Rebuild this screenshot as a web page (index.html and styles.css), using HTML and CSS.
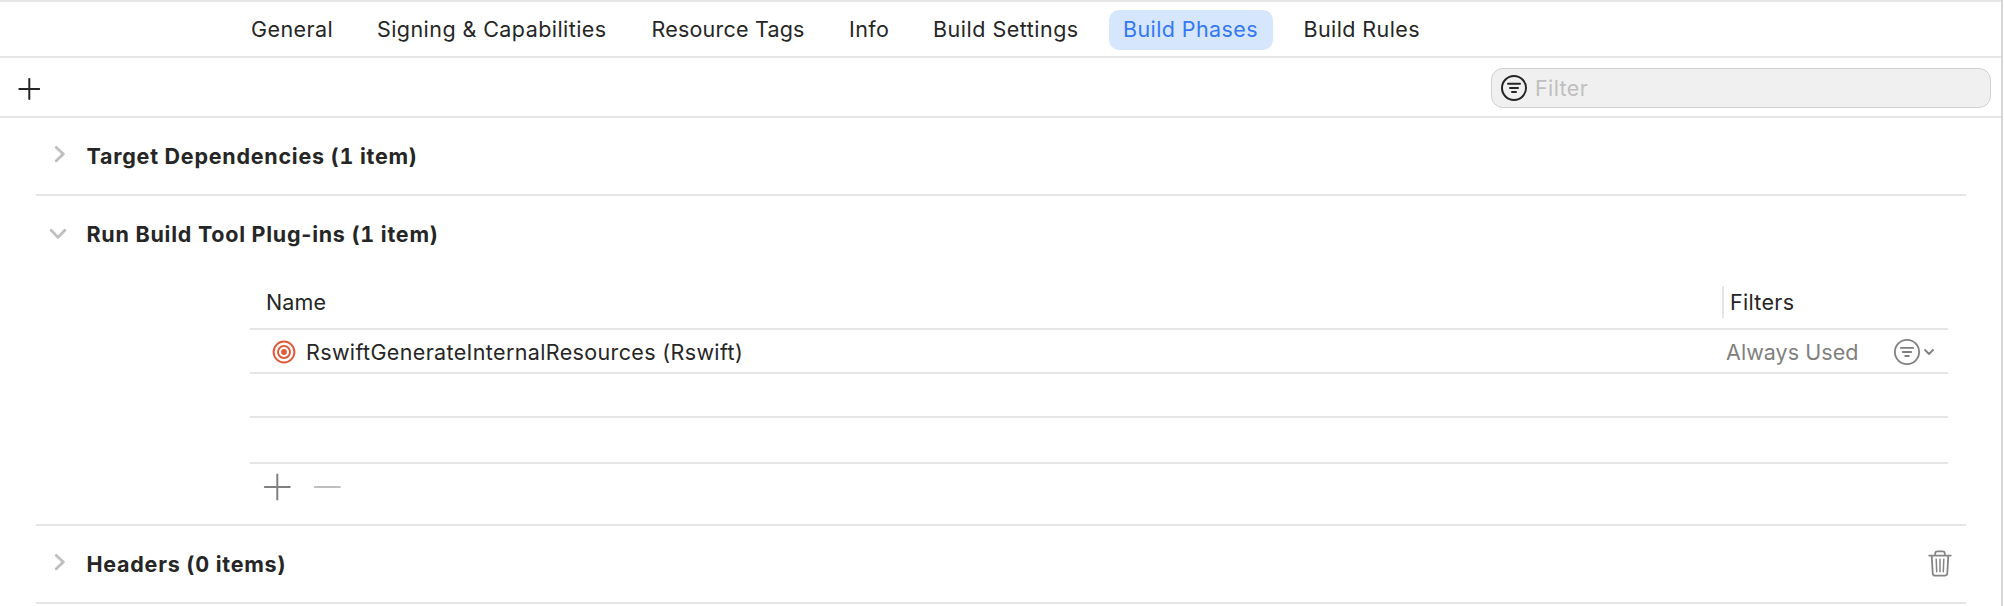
FILE: index.html
```
<!DOCTYPE html>
<html lang="en">
<head>
<meta charset="utf-8">
<title>Build Phases</title>
<link rel="stylesheet" href="styles.css">
</head>
<body>
<main class="editor">
  <nav class="tabs">
    <a class="tab">General</a>
    <a class="tab tab-signing">Signing &amp; Capabilities</a>
    <a class="tab tab-tags">Resource Tags</a>
    <a class="tab">Info</a>
    <a class="tab tab-settings">Build Settings</a>
    <a class="tab tab-active">Build Phases</a>
    <a class="tab">Build Rules</a>
  </nav>
  <div class="toolbar">
    <svg class="add" width="22" height="22" viewBox="0 0 22 22"><path d="M11.3 1v20M1.3 11h20"/></svg>
    <div class="filter">
      <svg class="funnel" width="26" height="26" viewBox="0 0 26 26"><circle cx="13" cy="13" r="12"/><path d="M7 8.7h12M9 13h8M11 17h4"/></svg>
      <span class="placeholder">Filter</span>
    </div>
  </div>
  <section class="phase">
    <header class="phase-header">
      <svg class="chevron" width="20" height="20" viewBox="0 0 20 20"><path d="M8.3 1.4l7 6.7l-7 6.7"/></svg>
      <h2 class="title">Target Dependencies (<span class="count">1</span> item)</h2>
    </header>
  </section>
  <section class="phase">
    <header class="phase-header">
      <svg class="chevron" width="20" height="20" viewBox="0 0 20 20"><path d="M3.2 6.2l6.8 7.2l6.8-7.2"/></svg>
      <h2 class="title">Run Build Tool Plug-ins (<span class="count">1</span> item)</h2>
    </header>
    <div class="table">
      <div class="row head">
        <span class="name">Name</span>
        <span class="filters">Filters</span>
      </div>
      <div class="row item">
        <svg class="target" width="24" height="24" viewBox="0 0 24 24"><circle cx="12" cy="12" r="10.4"/><circle cx="12" cy="12" r="6"/><circle class="dot" cx="12" cy="12" r="2.9"/></svg>
        <span class="plugin">RswiftGenerateInternalResources (Rswift)</span>
        <span class="usage">Always Used</span>
        <svg class="funnel muted" width="42" height="26" viewBox="0 0 42 26"><circle cx="13" cy="13" r="12.1"/><path d="M6.8 8.9h12.4M8.8 13h8.4M11.2 17h3.6"/><path d="M31 11l4 4 4-4"/></svg>
      </div>
      <div class="row empty"></div>
      <div class="row empty-last"></div>
      <div class="actions">
        <svg width="28" height="28" viewBox="0 0 28 28"><path d="M14.3 1.5v25M1.8 14h25"/></svg>
        <svg class="disabled" width="28" height="28" viewBox="0 0 28 28"><path d="M1.8 14h25"/></svg>
      </div>
    </div>
  </section>
  <section class="phase">
    <header class="phase-header">
      <svg class="chevron" width="20" height="20" viewBox="0 0 20 20"><path d="M8.3 1.4l7 6.7l-7 6.7"/></svg>
      <h2 class="title">Headers (<span class="count">0</span> items)</h2>
      <svg class="trash" width="24" height="28" viewBox="0 0 24 28"><path d="M1.2 5.6h21.6M7.2 5.4V3.6q0-2.3 2.3-2.3h5q2.3 0 2.3 2.3V5.4M3.7 5.9l1 17.3q.2 2.5 2.6 2.5h9.4q2.4 0 2.6-2.5l1-17.3"/><path class="ribs" d="M8.2 9.3l.5 12.4M12 9.3v12.4M15.8 9.3l-.5 12.4"/></svg>
    </header>
  </section>
</main>
</body>
</html>
```
FILE: styles.css
```
* { box-sizing: border-box; }
body {
  margin: 0;
  background: #fff;
  color: #262626;
  font: 21.5px/26px Inter, "Liberation Sans", sans-serif;
  letter-spacing: 0.4px;
}
svg {
  display: block;
  flex: none;
  fill: none;
  stroke: #262626;
  stroke-width: 2;
  stroke-linecap: round;
  stroke-linejoin: round;
}
.editor {
  width: 2003px;
  height: 606px;
  overflow: hidden;
  border-right: 2px solid #d6d6d6;
}
.tabs {
  display: grid;
  grid-template-columns: 126px 274.5px 197.5px 84px 190px 180.5px auto;
  align-items: center;
  height: 58px;
  padding-left: 237px;
  border: solid #e5e5e5;
  border-width: 2px 0;
  white-space: nowrap;
}
.tab { padding: 7px 14px; }
.tab-signing { letter-spacing: 0.43px; }
.tab-tags { letter-spacing: 0.2px; }
.tab-settings { letter-spacing: 0.5px; }
.tab-active {
  width: 164px;
  margin-top: 2px;
  padding: 6px 14px 8px;
  border-radius: 10px;
  background: #d6e6fd;
  color: #3478f6;
}
.toolbar {
  display: flex;
  align-items: center;
  justify-content: space-between;
  height: 60px;
  padding: 2px 10px 0 18px;
  border-bottom: 2px solid #e5e5e5;
}
.add { margin-top: 1px; }
.filter {
  display: flex;
  align-items: center;
  gap: 8px;
  width: 500px;
  height: 40px;
  padding-left: 9px;
  border: 1px solid #d0d0d0;
  border-radius: 12px;
  background: #f0f0f0;
}
.placeholder { color: #bfbfbf; }
.phase {
  margin: 0 35px 0 36px;
  border-bottom: 2px solid #e5e5e5;
}
.phase-header {
  display: flex;
  align-items: center;
  height: 76px;
  padding: 0 14px 0 12px;
}
.chevron {
  stroke: #bfbfbf;
  stroke-width: 2.8;
}
.title {
  flex: 1;
  margin: 0 0 0 18.5px;
  font-size: 21.5px;
  font-weight: 700;
  letter-spacing: 0.75px;
}
.count { font-variant-numeric: tabular-nums; }
.table { margin: 4px 18px 0 214px; }
.row {
  display: flex;
  align-items: center;
  height: 44px;
  border-bottom: 2px solid #e5e5e5;
}
.head {
  justify-content: space-between;
  height: 54px;
  padding-left: 16px;
}
.name { letter-spacing: 0.1px; }
.filters {
  width: 226px;
  padding: 3px 0 3px 6px;
  border-left: 2px solid #e5e5e5;
  letter-spacing: 0.3px;
}
.item { padding: 2px 12px 0 21.5px; }
.target {
  stroke: #e05a3c;
  stroke-width: 2;
}
.dot {
  fill: #e05a3c;
  stroke: none;
}
.plugin {
  flex: 1;
  margin-left: 10.5px;
  letter-spacing: 0.36px;
}
.usage {
  width: 168px;
  color: #808080;
  letter-spacing: 0.05px;
}
.muted {
  stroke: #808080;
  stroke-width: 1.8;
}
.empty-last { height: 46px; }
.actions {
  display: flex;
  gap: 22px;
  height: 60px;
  padding: 9px 0 0 13px;
}
.actions svg { stroke: #808080; }
.actions .disabled { stroke: #bfbfbf; }
.trash {
  stroke: #858585;
  stroke-width: 1.8;
}
.ribs { stroke-width: 1.5; }
```
